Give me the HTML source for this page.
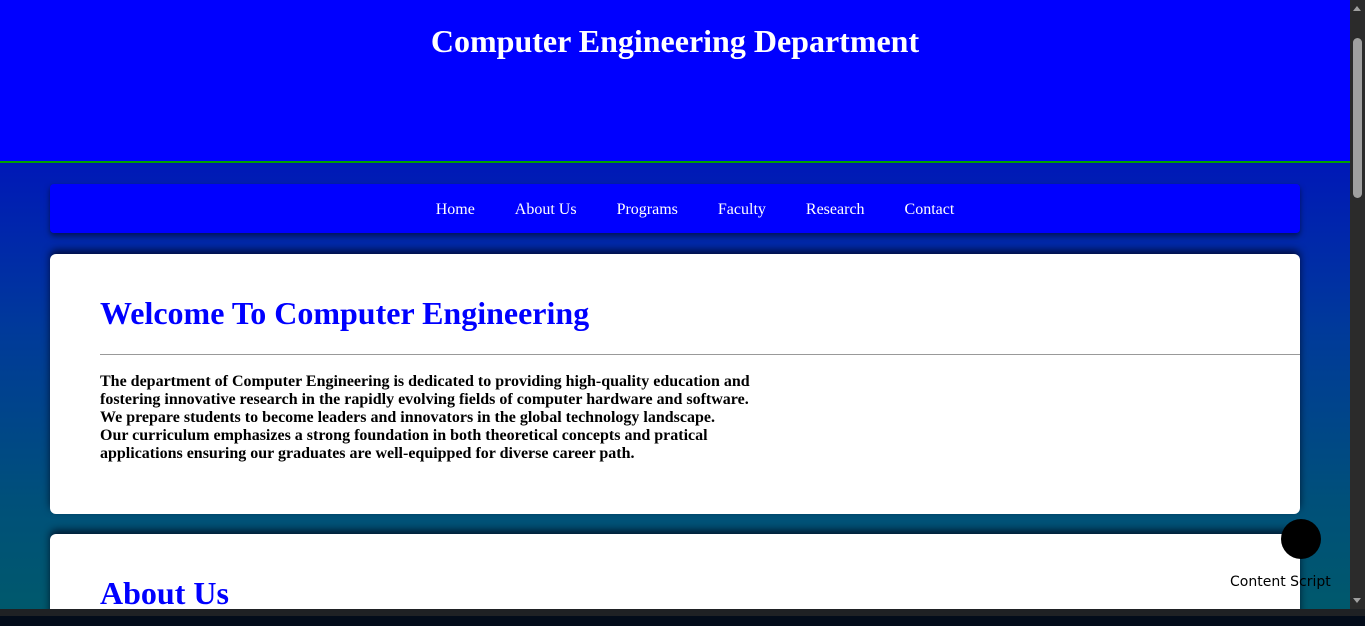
<!DOCTYPE html>
<html><head><meta charset="utf-8"><style>
*{margin:0;padding:0;box-sizing:border-box}
html,body{width:1365px;height:626px;overflow:hidden}
body{font-family:"Liberation Serif",serif;background:linear-gradient(#0018b8 160px,#003a9a 330px,#00507a 500px,#005a6a 626px);position:relative}
.header{position:absolute;left:0;top:0;width:1350px;height:163px;background:#0000ff;border-bottom:2px solid #00a000;text-align:center}
.header h1{color:#fff;font-size:32px;font-weight:bold;padding-top:23px}
.nav{position:absolute;left:50px;top:184px;width:1250px;height:49px;background:#0000ff;border-radius:4px;box-shadow:0 3px 6px rgba(0,0,0,.5);text-align:center;font-size:16px;color:#fff;line-height:51px;padding-left:40px}
.nav span{margin:0 20px}
.card{position:absolute;left:50px;width:1250px;background:#fff;border-radius:6px;box-shadow:0 -4px 8px rgba(0,0,20,.7)}
.c1{top:254px;height:260px}
.c2{top:534px;height:100px}
.card h2{color:#0000ff;font-size:32px;font-weight:bold;position:absolute;left:50px}
.c1 h2{top:41px}
.c2 h2{top:41px}
hr{position:absolute;left:50px;right:0;top:100px;border:0;border-top:1px solid #999}
.c1 p{position:absolute;left:50px;top:119px;font-weight:bold;font-size:16px;line-height:18px;width:660px}
.sb{position:absolute;right:0;top:0;width:15px;height:609px;background:#2b2b2b}
.thumb{position:absolute;left:3px;top:38px;width:9px;height:160px;background:#a0a0a0;border-radius:5px}
.bot{position:absolute;left:0;top:609px;width:1365px;height:17px;background:#030c1a;border-top:7px solid #1f2124}
.dot{position:absolute;left:1281px;top:519px;width:40px;height:40px;border-radius:50%;background:#000}
.cs{position:absolute;left:1230px;top:574px;font-family:"DejaVu Sans",sans-serif;font-size:14px;color:#000}
</style></head><body>
<div class="header"><h1>Computer Engineering Department</h1></div>
<div class="nav"><span>Home</span><span>About Us</span><span>Programs</span><span>Faculty</span><span>Research</span><span>Contact</span></div>
<div class="card c1"><h2>Welcome To Computer Engineering</h2><hr><p>The department of Computer Engineering is dedicated to providing high-quality education and fostering innovative research in the rapidly evolving fields of computer hardware and software.<br>We prepare students to become leaders and innovators in the global technology landscape.<br>Our curriculum emphasizes a strong foundation in both theoretical concepts and pratical applications ensuring our graduates are well-equipped for diverse career path.</p></div>
<div class="card c2"><h2>About Us</h2></div>
<div class="dot"></div><div class="cs">Content Script</div>
<div class="sb"><div class="thumb"></div>
<div style="position:absolute;left:3px;top:6px;border:4px solid transparent;border-bottom:5px solid #a0a0a0;border-top:0"></div>
<div style="position:absolute;left:3px;top:598px;border:4px solid transparent;border-top:5px solid #a0a0a0;border-bottom:0"></div></div>
<div class="bot"></div>
</body></html>
